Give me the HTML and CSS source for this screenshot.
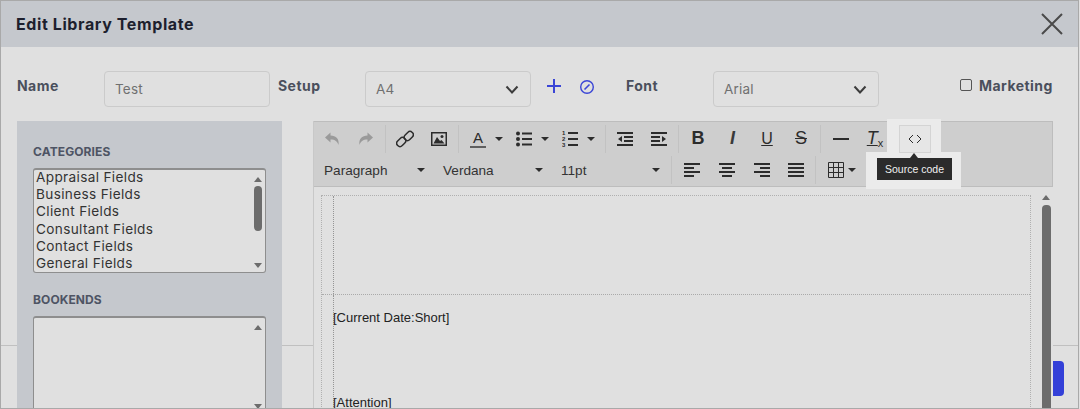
FILE: index.html
```html
<!DOCTYPE html>
<html lang="en">
<head>
    <meta charset="UTF-8">
    <title>Edit Library Template</title>
    <link rel="stylesheet" href="styles.css">
</head>
<body>
    <div class="modal">
        <header class="modal-head">
            <h3>Edit Library Template</h3>
            <svg class="close" width="24" height="24" viewBox="0 0 24 24"><path d="M2 2 22 22M22 2 2 22" stroke="#4a4a4a" stroke-width="2" fill="none"/></svg>
        </header>

        <!-- footer sits under the main area, only its edges show -->
        <div class="modal-foot"><span class="save-btn"></span></div>

        <section class="fields">
            <label class="lbl">Name</label>
            <div class="input">Test</div>
            <label class="lbl lbl-setup">Setup</label>
            <div class="input select">A4
                <svg width="14" height="9" viewBox="0 0 14 9"><path d="M1.500 1.500 7 7.500 12.500 1.500" stroke="#3c3c3c" stroke-width="2" fill="none"/></svg>
            </div>
            <svg class="plus" width="16" height="16" viewBox="0 0 16 16"><path d="M8 1V15M1 8H15" stroke="#3a45d6" stroke-width="2"/></svg>
            <svg class="ban" width="16" height="16" viewBox="0 0 16 16"><circle cx="8" cy="8" r="6.300" stroke="#3a45d6" stroke-width="1.400" fill="none"/><path d="M5.500 10.500 10.500 5.500" stroke="#3a45d6" stroke-width="1.600"/></svg>
            <label class="lbl lbl-font">Font</label>
            <div class="input select">Arial
                <svg width="14" height="9" viewBox="0 0 14 9"><path d="M1.500 1.500 7 7.500 12.500 1.500" stroke="#3c3c3c" stroke-width="2" fill="none"/></svg>
            </div>
            <span class="check"></span>
            <label class="lbl lbl-market">Marketing</label>
        </section>

        <section class="main">
            <aside class="sidebar">
                <h4>Categories</h4>
                <div class="listbox">
                    <ul>
                        <li>Appraisal Fields</li>
                        <li>Business Fields</li>
                        <li>Client Fields</li>
                        <li>Consultant Fields</li>
                        <li>Contact Fields</li>
                        <li>General Fields</li>
                    </ul>
                    <div class="scroll">
                        <i class="arrow-up"></i>
                        <b class="thumb"></b>
                        <i class="arrow-down"></i>
                    </div>
                </div>
                <h4>Bookends</h4>
                <div class="listbox listbox-tall">
                    <ul></ul>
                    <div class="scroll">
                        <i class="arrow-up"></i>
                        <i class="arrow-down"></i>
                    </div>
                </div>
            </aside>

            <article class="editor">
                <div class="toolbar">
                    <div class="tb-row">
                        <span class="btn off"><svg width="16" height="16" viewBox="0 0 16 16"><path d="M1 6.500 6.500 1.500V4.500C12 4.500 15.500 8 14.500 14 13.500 10.500 11 8.500 6.500 8.500V11.500Z"/></svg></span>
                        <span class="btn off"><svg width="16" height="16" viewBox="0 0 16 16"><path d="M15 6.500 9.500 1.500V4.500C4 4.500 .5 8 1.500 14 2.500 10.500 5 8.500 9.500 8.500V11.500Z"/></svg></span>
                        <span class="sep"></span>
                        <span class="btn"><svg class="line" width="18" height="18" viewBox="0 0 18 18"><rect x="9.500" y="1" width="6.500" height="10" rx="3.200" transform="rotate(45 12.750 6)"/><rect x="2" y="7" width="6.500" height="10" rx="3.200" transform="rotate(45 5.250 12)"/></svg></span>
                        <span class="btn"><svg width="16" height="14" viewBox="0 0 16 14"><path fill-rule="evenodd" d="M0 0H16V14H0ZM1.500 1.500V12.500H14.500V1.500Z"/><path d="M2.500 11.500 6 5 9 9 10.500 8 13.500 11.500Z"/><circle cx="11" cy="4.500" r="1.500"/></svg></span>
                        <span class="sep"></span>
                        <span class="btn split"><span class="ico-a">A</span><i class="caret"></i></span>
                        <span class="btn split"><svg width="16" height="16" viewBox="0 0 16 16"><circle cx="2" cy="2.500" r="2"/><circle cx="2" cy="8" r="2"/><circle cx="2" cy="13.500" r="2"/><path d="M6 1.500H16V3.500H6ZM6 7H16V9H6ZM6 12.500H16V14.500H6Z"/></svg><i class="caret"></i></span>
                        <span class="btn split"><svg width="16" height="17" viewBox="0 0 16 17"><text x="0" y="5" class="tiny">1</text><text x="0" y="11" class="tiny">2</text><text x="0" y="17" class="tiny">3</text><path d="M6 2H16V4H6ZM6 8H16V10H6ZM6 14H16V16H6Z"/></svg><i class="caret"></i></span>
                        <span class="sep sep-wide"></span>
                        <span class="btn"><svg width="16" height="16" viewBox="0 0 16 16"><path d="M0 1H16V3H0ZM7 5H16V7H7ZM7 9H16V11H7ZM0 13H16V15H0ZM5 5V11L1 8Z"/></svg></span>
                        <span class="btn"><svg width="16" height="16" viewBox="0 0 16 16"><path d="M0 1H16V3H0ZM0 5H9V7H0ZM0 9H9V11H0ZM0 13H16V15H0ZM11 5V11L15 8Z"/></svg></span>
                        <span class="sep"></span>
                        <span class="btn txt bold">B</span>
                        <span class="btn txt ital">I</span>
                        <span class="btn txt under">U</span>
                        <span class="btn txt strike">S</span>
                        <span class="sep sep-hr"></span>
                        <span class="btn"><svg width="16" height="2" viewBox="0 0 16 2"><path d="M0 0H16V2H0Z"/></svg></span>
                        <span class="btn txt clear"><em>T</em><small>x</small></span>
                        <span class="sep"></span>
                        <span class="btn btn-code"><svg class="line thin" width="14" height="10" viewBox="0 0 14 10"><path d="M5 1 1 5 5 9M9 1 13 5 9 9"/></svg></span>
                    </div>
                    <div class="tb-row">
                        <span class="drop drop-first">Paragraph<i class="caret"></i></span>
                        <span class="drop">Verdana<i class="caret"></i></span>
                        <span class="drop drop-last">11pt<i class="caret"></i></span>
                        <span class="sep"></span>
                        <span class="btn btn-align"><svg width="16" height="16" viewBox="0 0 16 16"><path d="M0 1H16V3H0ZM0 5H10V7H0ZM0 9H16V11H0ZM0 13H10V15H0Z"/></svg></span>
                        <span class="btn btn-align"><svg width="16" height="16" viewBox="0 0 16 16"><path d="M0 1H16V3H0ZM3 5H13V7H3ZM0 9H16V11H0ZM3 13H13V15H3Z"/></svg></span>
                        <span class="btn btn-align"><svg width="16" height="16" viewBox="0 0 16 16"><path d="M0 1H16V3H0ZM6 5H16V7H6ZM0 9H16V11H0ZM6 13H16V15H6Z"/></svg></span>
                        <span class="btn"><svg width="16" height="16" viewBox="0 0 16 16"><path d="M0 1H16V3H0ZM0 5H16V7H0ZM0 9H16V11H0ZM0 13H16V15H0Z"/></svg></span>
                        <span class="sep"></span>
                        <span class="btn split split-table"><svg class="line thin" width="16" height="16" viewBox="0 0 16 16"><path d="M.5 .5H15.500V15.500H.5ZM.5 5.500H15.500M.5 10.500H15.500M5.500 .5V15.500M10.500 .5V15.500"/></svg><i class="caret"></i></span>
                    </div>

                    <div class="glow glow-top"></div>
                    <div class="glow glow-bottom"></div>
                    <div class="tooltip">Source code</div>
                </div>

                <div class="content">
                    <div class="doc">
                        <div class="doc-row doc-head"><div class="doc-cell"></div></div>
                        <div class="doc-row">
                            <div class="doc-cell">
                                <p>[Current Date:Short]</p>
                                <p class="attention">[Attention]</p>
                            </div>
                        </div>
                    </div>
                    <div class="scroll scroll-doc">
                        <i class="arrow-up"></i>
                        <b class="thumb"></b>
                    </div>
                </div>
            </article>
        </section>
    </div>
</body>
</html>
```

FILE: styles.css
```css
* {
    box-sizing: border-box;
}

html, body {
    margin  : 0;
    height  : 100%;
    overflow: hidden;
}

body {
    background-color: #e0e0e0;
    font-family     : Inter, "Noto Sans", sans-serif;
    color           : #2c2c2c;
}

.modal {
    position: relative;
    width   : 1079px;
    height  : 409px;
    border  : 1px solid #a9a9a9;
    overflow: hidden;
}

.modal-head {
    display         : flex;
    justify-content : space-between;
    align-items     : center;
    height          : 46px;
    padding         : 0 14px 0 15px;
    background-color: #c5c8cd;
}

.modal-head h3 {
    margin        : 0;
    font-size     : 16px;
    font-weight   : 700;
    letter-spacing: .6px;
    color         : #1d1f2e;
}

.modal-foot {
    position  : absolute;
    top       : 344px;
    left      : 0;
    right     : 0;
    height    : 64px;
    padding   : 15px 14px 0 0;
    border-top: 1px solid #c0c0c0;
    text-align: right;
}

.save-btn {
    display         : inline-block;
    width           : 60px;
    height          : 35px;
    border-radius   : 4px;
    background-color: #3340d8;
}

/* top row */
.fields {
    display    : flex;
    align-items: flex-start;
    height     : 36px;
    margin-top : 24px;
    padding    : 0 0 0 16px;
}

.lbl {
    width         : 87px;
    padding-top   : 6px;
    font-size     : 14px;
    font-weight   : 700;
    letter-spacing: .45px;
    color         : #4a4f5c;
}

.lbl-setup {
    margin-left: 8px;
}

.lbl-font {
    margin-left: 31px;
}

.lbl-market {
    width      : auto;
    margin-left: 7px;
}

.input {
    display       : flex;
    align-items   : center;
    width         : 166px;
    height        : 36px;
    padding       : 0 11px 0 10px;
    border        : 1px solid #cbcbcb;
    border-radius : 4px;
    font-size     : 13.500px;
    letter-spacing: .2px;
    color         : #707070;
}

.select {
    justify-content: space-between;
}

.plus {
    margin: 7px 0 0 15px;
}

.ban {
    margin: 8px 0 0 17px;
}

.check {
    width        : 12px;
    height       : 12px;
    margin       : 8px 0 0 81px;
    border       : 1px solid #555;
    border-radius: 2px;
}

/* body */
.main {
    position  : relative;
    display   : flex;
    gap       : 31px;
    margin-top: 14px;
    padding   : 0 0 0 16px;
}

.sidebar {
    width           : 265px;
    height          : 300px;
    padding         : 24px 16px 0;
    background-color: #c5c8cd;
}

.sidebar h4 {
    margin        : 0 0 9px;
    font-size     : 12px;
    line-height   : 14px;
    font-weight   : 700;
    letter-spacing: .1px;
    text-transform: uppercase;
    color         : #4e5464;
}

.listbox {
    display         : flex;
    justify-content : space-between;
    height          : 105px;
    margin-bottom   : 20px;
    padding         : 0 0 0 2px;
    border          : 1px solid #8e8e8e;
    border-top-width: 2px;
    border-radius   : 3px;
    background-color: #e0e0e0;
}

.listbox-tall {
    height: 98px;
}

.listbox ul {
    margin        : -1px 0 0;
    padding       : 0;
    list-style    : none;
    font-size     : 13.600px;
    line-height   : 17.200px;
    letter-spacing: .35px;
    color         : #333;
}

.scroll {
    display        : flex;
    flex-direction : column;
    align-items    : center;
    width          : 14px;
    padding        : 7px 0 4px;
}

.thumb {
    width           : 8px;
    height          : 45px;
    margin          : 4px 0 auto;
    border-radius   : 4px;
    background-color: #6c6c6c;
}

.arrow-up, .arrow-down {
    width       : 0;
    height      : 0;
    border-left : 4px solid transparent;
    border-right: 4px solid transparent;
}

.arrow-up {
    border-bottom: 5px solid #6c6c6c;
}

.arrow-down {
    margin-top: auto;
    border-top: 5px solid #6c6c6c;
}

/* editor */
.editor {
    width           : 740px;
    height          : 300px;
    border-left     : 1px solid #c8c8c8;
    background-color: #e0e0e0;
}

.toolbar {
    position        : relative;
    height          : 66px;
    border          : 1px solid #bdbdbd;
    border-left     : 0;
    background-color: #cecece;
}

.tb-row {
    display     : flex;
    align-items : center;
    height      : 33px;
    padding-left: 1px;
}

.tb-row + .tb-row {
    height    : 32px;
    margin-top: -1px;
}

.btn {
    display        : flex;
    align-items    : center;
    justify-content: center;
    flex           : none;
    width          : 34px;
    height         : 28px;
}

.btn svg {
    fill: #2c2c2c;
}

.btn svg.line {
    fill        : none;
    stroke      : #2c2c2c;
    stroke-width: 1.500;
}

.btn svg.thin {
    stroke-width: 1;
}

.off svg {
    fill: #9a9a9a;
}

.btn-align {
    width: 35px;
}

.split {
    justify-content: flex-start;
    width          : 46px;
    padding-left   : 9px;
}

.split .caret {
    margin-left: 9px;
}

.split-table {
    width       : 44px;
    padding-left: 10px;
}

.split-table .caret {
    margin-left: 4px;
}

.caret {
    flex        : none;
    width       : 0;
    height      : 0;
    border-top  : 4px solid #2c2c2c;
    border-left : 4px solid transparent;
    border-right: 4px solid transparent;
}

.sep {
    flex            : none;
    width           : 1px;
    height          : 28px;
    margin          : 0 2px;
    background-color: #c2c2c2;
}

.sep-wide {
    margin-left: 6px;
}

.sep-hr {
    margin: 0 3px 0 2px;
}

.tiny {
    font-family: "Liberation Sans", sans-serif;
    font-size  : 6px;
    font-weight: 700;
}

.ico-a {
    width        : 16px;
    border-bottom: 2px solid #5f5f5f;
    font-family  : "Liberation Sans", sans-serif;
    font-size    : 15px;
    line-height  : 16px;
    text-align   : center;
}

.txt {
    font-family: "Liberation Sans", sans-serif;
    font-size  : 18px;
}

.bold {
    font-weight: 700;
}

.ital {
    width      : 35px;
    font-style : italic;
    font-size  : 18px;
    font-weight: 700;
    color      : #3a3a3a;
}

.under {
    text-decoration: underline;
    font-size      : 16px;
}

.strike {
    text-decoration: line-through;
}

.clear em {
    text-decoration: underline;
}

.clear small {
    font-size : 11px;
    margin-top: 8px;
}

.btn-code {
    position        : relative;
    z-index         : 2;
    width           : 32px;
    margin-left     : 2px;
    border          : 1px solid #d4d4d4;
    background-color: #e6e6e6;
}

.drop {
    display        : flex;
    align-items    : center;
    justify-content: space-between;
    flex           : none;
    width          : 118px;
    padding        : 0 9px;
    font-family    : "Liberation Sans", sans-serif;
    font-size      : 13.600px;
    color          : #333;
}

.drop-first {
    width: 119px;
}

.drop-last {
    width: 117px;
}

.glow {
    position        : absolute;
    z-index         : 1;
    background-color: #ebebeb;
}

.glow-top {
    left  : 573px;
    top   : -3px;
    width : 54px;
    height: 35px;
}

.glow-bottom {
    left  : 552px;
    top   : 30px;
    width : 95px;
    height: 37px;
}

.tooltip {
    position        : absolute;
    z-index         : 2;
    left            : 563px;
    top             : 36px;
    width           : 75px;
    height          : 22px;
    background-color: #2b2b2b;
    font-family     : "Liberation Sans", sans-serif;
    font-size       : 10.500px;
    line-height     : 22px;
    text-align      : center;
    color           : #f2f2f2;
}

.tooltip::before {
    content      : "";
    position     : absolute;
    left         : 33px;
    top          : -5px;
    border-bottom: 5px solid #2b2b2b;
    border-left  : 4px solid transparent;
    border-right : 4px solid transparent;
}

.content {
    display: flex;
    height : 234px;
    padding: 8px 0 0 7px;
}

.doc {
    flex         : none;
    width        : 710px;
    border       : 1px dotted #b0b0b0;
    border-bottom: 0;
}

.doc-row {
    padding-left: 11px;
}

.doc-head {
    height       : 99px;
    border-bottom: 1px dotted #aaa;
}

.doc-cell {
    height     : 100%;
    min-height : 140px;
    border-left: 1px dotted #959595;
    font-family: "Liberation Sans", sans-serif;
    font-size  : 13px;
    line-height: 15px;
    color      : #222;
}

.doc-head .doc-cell {
    min-height: 0;
}

.doc-cell p {
    margin : 0 0 0 -1px;
    padding: 15px 0 0 0;
}

.doc-cell .attention {
    padding-top: 70px;
}

.scroll-doc {
    width      : 10px;
    margin-left: 10px;
    padding    : 0;
}

.scroll-doc .thumb {
    flex  : 1;
    width : 9px;
    margin: 5px 0 0;
}
```
